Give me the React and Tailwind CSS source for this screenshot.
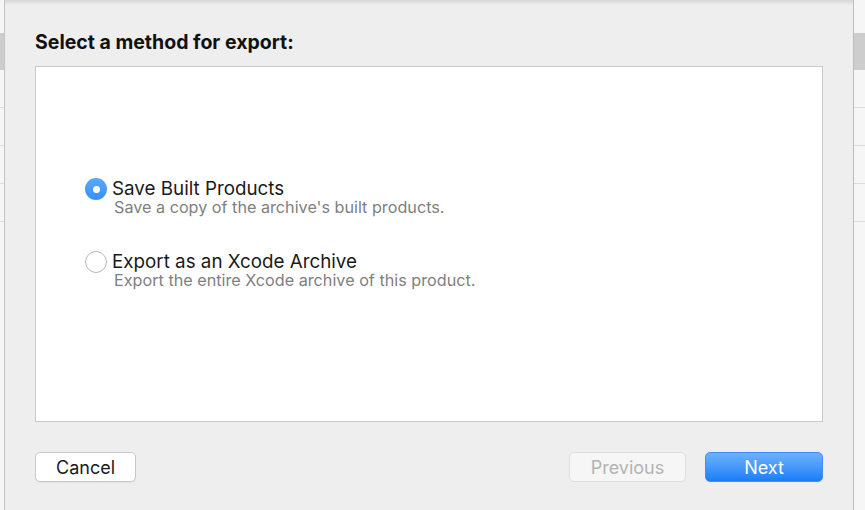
import { useState } from 'react';

const font = { fontFamily: '"Inter", "Liberation Sans", sans-serif' };

const options = [
  { id: 'built', title: 'Save Built Products', desc: "Save a copy of the archive's built products." },
  { id: 'archive', title: 'Export as an Xcode Archive', desc: 'Export the entire Xcode archive of this product.' },
];

// rows of the window sitting behind the sheet, only the edges show
const BackdropStrip = ({ className }) => (
  <div className={`flex flex-col bg-[#f6f6f6] ${className}`}>
    <div className="h-[33px]" />
    <div className="h-[37px] bg-[#cdcdcd]" />
    <div className="h-[38px] border-b border-[#dcdcdc]" />
    <div className="h-[38px] border-b border-[#dcdcdc]" />
    <div className="h-[38px] border-b border-[#dcdcdc]" />
    <div className="h-[38px] border-b border-[#dcdcdc]" />
  </div>
);

const Radio = ({ checked }) =>
  checked ? (
    <span className="w-[22px] h-[22px] rounded-full bg-gradient-to-b from-[#5aa8fb] to-[#3591f9] flex items-center justify-center shrink-0">
      <span className="w-[7px] h-[7px] rounded-full bg-white" />
    </span>
  ) : (
    <span className="block w-[22px] h-[22px] rounded-full bg-white border border-[#b9b9b9] shrink-0" />
  );

const App = () => {
  const [method, setMethod] = useState('built');

  return (
    <div className="w-[865px] h-[510px] flex overflow-hidden bg-[#f6f6f6]" style={font}>
      <BackdropStrip className="w-[5px] border-r border-[#c4c4c4]" />

      <div className="flex-1 flex flex-col bg-[#eeeeee] relative">
        <div className="absolute inset-x-0 top-0 h-[5px] bg-gradient-to-b from-[#d6d6d6] to-[#eeeeee]" />

        <h1 className="pl-[30px] pt-[30px] text-[19.5px] leading-[24px] font-bold text-[#111]">
          Select a method for export:
        </h1>

        <div className="ml-[30px] mr-[30px] mt-[12px] h-[356px] bg-white border border-[#c9c9c9] flex flex-col pl-[49px] pt-[110px] gap-[35px]">
          {options.map((o) => (
            <button
              key={o.id}
              onClick={() => setMethod(o.id)}
              className="flex items-start gap-[5px] text-left"
            >
              <span className="pt-[1px]">
                <Radio checked={method === o.id} />
              </span>
              <span className="flex flex-col pt-[1px]">
                <span className="text-[18.8px] leading-[21px] text-[#1a1a1a]">{o.title}</span>
                <span className="text-[16.2px] leading-[16px] text-[#808080] pl-[2px]">{o.desc}</span>
              </span>
            </button>
          ))}
        </div>

        <div className="flex items-center px-[30px] mt-[30px]">
          <button className="w-[101px] h-[30px] rounded-[5px] bg-white border border-[#c8c8c8] shadow-[0_1px_0_rgba(0,0,0,0.04)] text-[18px] text-[#1a1a1a]">
            Cancel
          </button>
          <div className="flex-1" />
          <button
            disabled
            className="w-[117px] h-[30px] rounded-[5px] bg-[#f6f6f6] border border-[#dedede] text-[18px] text-[#b3b3b3]"
          >
            Previous
          </button>
          <button className="ml-[19px] w-[118px] h-[30px] rounded-[5px] bg-gradient-to-b from-[#6cb1fc] to-[#157ef8] border border-[#3e8ff0] text-[18px] text-white">
            Next
          </button>
        </div>
      </div>

      <BackdropStrip className="w-[12px] border-l border-[#bdbdbd]" />
    </div>
  );
};

export default App;
